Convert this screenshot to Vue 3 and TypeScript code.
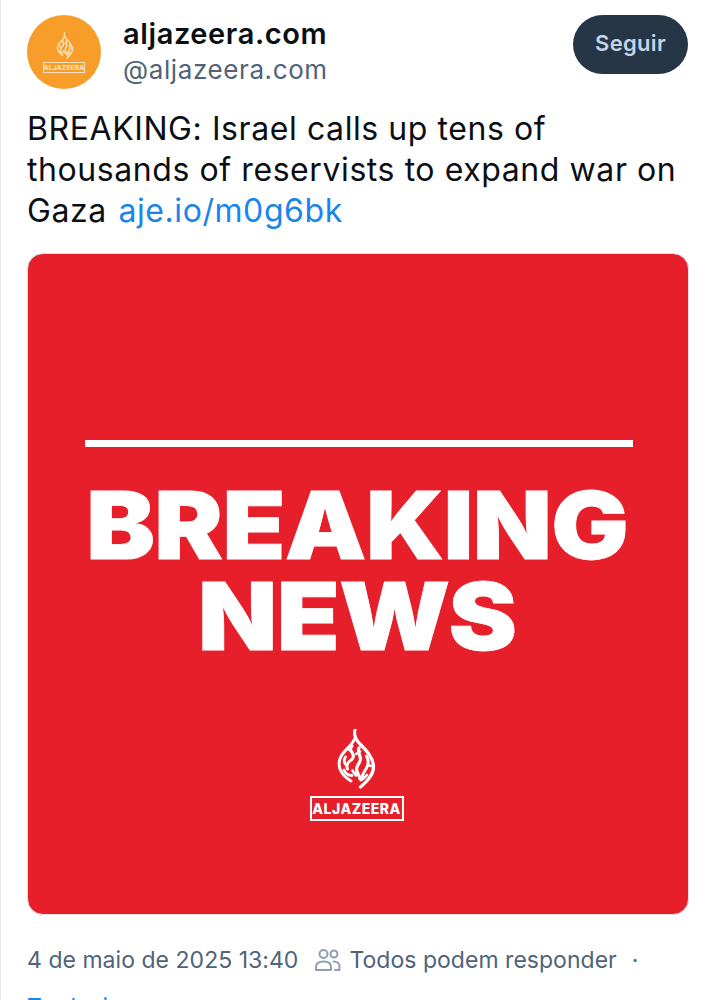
<script setup lang="ts">
const handle = '@aljazeera.com'

// Calligraphic flame of the Al Jazeera mark, in a 40x60 box; each stroke: d and width.
const markStrokes: { d: string; w: number }[] = [
  { d: 'M18 1c-1.500 5 .5 9 4.500 13.500C29 21 36 28 36.500 37c.4 8.500-6 15-13 21', w: 3.200 },
  { d: 'M17.500 10c-2 5-6 8-10 12.500C2.500 28 1 34 3 40c2 5.500 6 9 11 12', w: 3 },
  { d: 'M22 19c-2 4 1.500 7 1.500 11s-4 6-4 10 3 6 3.500 10', w: 3.200 },
  { d: 'M29.500 27c2.500 4.500 2 9-.5 13s-4.500 6-4 10', w: 3 },
  { d: 'M15 17c-2.500 3-1 5 .5 7.500s1 5-2 7-4.500 5-3 8.500', w: 3 },
  { d: 'M8.500 28c-2 3-1.500 7 1 7.500M7 41c1.500 3.500 4 5.500 8 5.500', w: 2.800 },
  { d: 'M15.500 41.500c1 2.500 3 2.500 3.500 5M30 46c-2 2.500-4 4-6 5', w: 2.800 },
  { d: 'M19 25l4-2.500M12 20.500l3.500 3M31 36l3 1', w: 2.600 }
]
</script>

<template>
  <main class="post">
    <header class="head">
      <div class="avatar">
        <svg width="74" height="74" viewBox="0 0 74 74">
          <circle cx="37" cy="37" r="37" fill="#f99d2a" />
          <g transform="translate(29.500 17.500) scale(.44)" fill="none" stroke="#fde3bd" stroke-linecap="round">
            <path v-for="s in markStrokes" :key="s.d" :d="s.d" :stroke-width="s.w" />
          </g>
          <rect x="16.500" y="47.500" width="41" height="10" fill="none" stroke="#fde3bd" />
          <text x="37" y="55" text-anchor="middle" class="avatar-word">ALJAZEERA</text>
        </svg>
      </div>
      <div class="names">
        <div class="display">aljazeera.com</div>
        <div class="handle">{{ handle }}</div>
      </div>
      <button class="follow" type="button">Seguir</button>
    </header>

    <p class="body">BREAKING: Israel calls up tens of thousands of reservists to expand war on Gaza <a class="link">aje.io/m0g6bk</a></p>

    <section class="card">
      <div class="rule"></div>
      <h1 class="headline">BREAKING<br />NEWS</h1>
      <div class="brand">
        <svg class="mark" width="40" height="60" viewBox="0 0 40 60" fill="none" stroke="#fff" stroke-linecap="round">
          <path v-for="s in markStrokes" :key="s.d" :d="s.d" :stroke-width="s.w" />
        </svg>
        <div class="wordmark">ALJAZEERA</div>
      </div>
    </section>

    <footer class="meta">
      <span class="date">4 de maio de 2025 13:40</span>
      <svg class="people" width="28" height="24" viewBox="0 0 28 24" fill="none" stroke="#8d9fb5" stroke-width="2">
        <circle cx="9.500" cy="6" r="4" />
        <circle cx="20" cy="6" r="3.500" />
        <path d="M2 22v-3c0-3.500 3-5.500 7.500-5.500S17 15.500 17 19v3z" stroke-linejoin="round" />
        <path d="M19.500 13.500c3.500 0 6 2 6 5V22H21" stroke-linecap="round" stroke-linejoin="round" />
      </svg>
      <span class="reply">Todos podem responder</span>
      <span class="dot">·</span>
    </footer>
    <a class="more">Traduzir</a>
  </main>
</template>

<style>
html, body { margin: 0; background: #fff; overflow: hidden; }
</style>

<style scoped>
.post {
  box-sizing: border-box;
  width: 716px;
  height: 1000px;
  overflow: hidden;
  padding: 15px 27px 0 26px;
  border-left: 1px solid #e9ecef;
  font-family: Inter, "Liberation Sans", sans-serif;
  color: #0b0f14;
}
.head { display: flex; align-items: flex-start; }
.avatar { width: 74px; height: 74px; flex: none; }
.avatar svg { display: block; }
.avatar-word { font: 800 6.500px Inter, sans-serif; fill: #fde3bd; letter-spacing: 0.200px; }
.names { flex: 1; margin-left: 22px; margin-top: 1px; min-width: 0; }
.display { font-size: 29px; font-weight: 600; line-height: 36px; letter-spacing: 0.600px; }
.handle { font-size: 26px; line-height: 36px; color: #4f6379; letter-spacing: 0.600px; }
.follow {
  width: 115px; height: 59px;
  margin-right: 1px;
  border: 0; border-radius: 30px;
  background: #273646; color: #c5d3e6;
  font: 600 22px Inter, sans-serif;
  letter-spacing: 0.300px;
  padding: 0 0 3px;
}
.body {
  margin: 19px 0 0;
  font-size: 32px;
  line-height: 41px;
  letter-spacing: 0.580px;
  width: 660px;
}
.link { color: #1a85e8; margin-left: 2px; }
.card {
  box-sizing: border-box;
  width: 662px; height: 662px;
  margin-top: 22px;
  border-radius: 16px;
  border: 1px solid #dde2e8;
  background: #e61f2b;
  display: flex; flex-direction: column; align-items: center;
}
.rule { width: 548px; height: 7px; background: #fff; margin: 186px 0 0 2px; }
.headline {
  margin: 33px 2px 0 0;
  font-family: Inter, "Liberation Sans", sans-serif;
  font-weight: 900;
  font-size: 93px;
  line-height: 91px;
  letter-spacing: -0.500px;
  text-align: center;
  color: #fff;
  transform: scaleX(1.105);
  -webkit-text-stroke: 0.800px #fff;
}
.brand { display: flex; flex-direction: column; align-items: center; margin: 67px 3px 0 0; }
.mark { display: block; }
.wordmark {
  box-sizing: border-box;
  width: 94px; height: 25px;
  margin-top: 7px;
  border: 2px solid #fff;
  color: #fff;
  font-size: 14px; font-weight: 800;
  line-height: 21px;
  text-align: center;
  letter-spacing: 0.500px;
}
.meta {
  display: flex; align-items: center;
  margin-top: 28px;
  height: 34px;
  font-size: 23px;
  letter-spacing: 0.030px;
  color: #4f6379;
  white-space: nowrap;
}
.people { margin-left: 16px; }
.reply { margin-left: 7px; }
.dot { margin-left: 15px; }
.more { display: block; margin-top: 16px; color: #1a85e8; font-size: 23px; }
</style>
